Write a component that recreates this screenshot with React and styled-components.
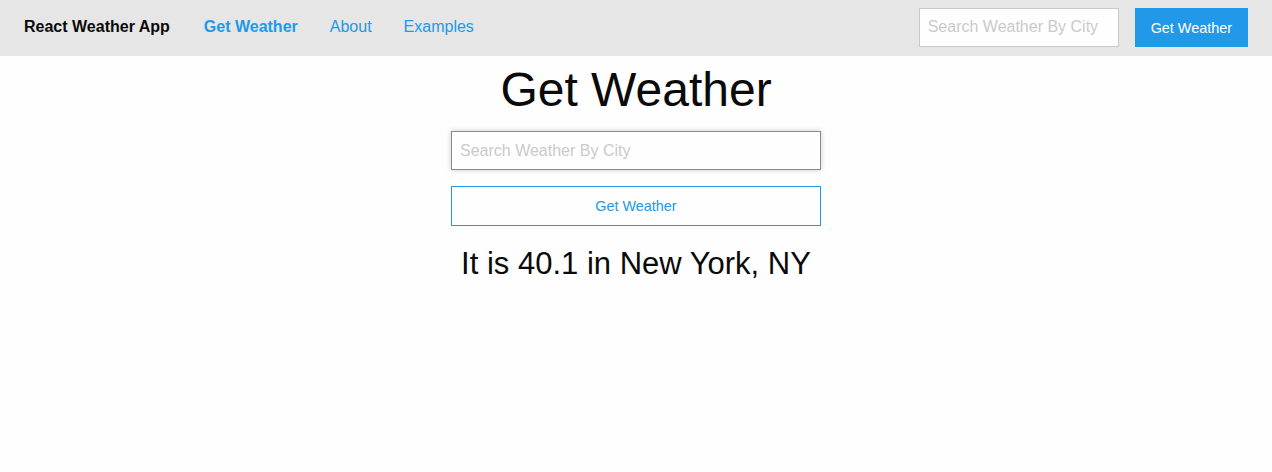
import styled, { createGlobalStyle } from "styled-components";

const GlobalStyle = createGlobalStyle`
  * { box-sizing: border-box; }
  html, body { margin: 0; padding: 0; background: #fefefe; }
  body {
    font-family: "Liberation Sans", Arial, Helvetica, sans-serif;
    color: #0a0a0a;
    font-size: 16px;
  }
  input::placeholder { color: #cacaca; opacity: 1; }
`

const TopBar = styled.div`
  height: 56px;
  background: #e6e6e6;
  padding: 0 24px 2px 8px;
  display: flex;
  align-items: center;
  justify-content: space-between;
`

const Menu = styled.ul`
  display: flex;
  align-items: center;
  list-style: none;
  margin: 0;
  padding: 0;
  gap: ${p => p.gap || 0}px;
`

const MenuText = styled.li`
  font-weight: bold;
  padding: 11px 18px 11px 16px;
  line-height: 1;
`

const MenuLink = styled.a`
  display: block;
  padding: 11px 16px;
  line-height: 1;
  color: #2199e8;
  text-decoration: none;
  font-weight: ${p => (p.active ? "bold" : "normal")};
`

const NavInput = styled.input`
  width: 200px;
  height: 39px;
  border: 1px solid #cacaca;
  background: #fefefe;
  padding: 8px;
  font-family: inherit;
  font-size: 16px;
  color: #0a0a0a;
  outline: none;
  margin: 0;
`

const Button = styled.button`
  font-family: inherit;
  font-size: 14.4px;
  line-height: 1;
  padding: 12px ${p => (p.hollow ? 16 : 15)}px;
  height: 39px;
  margin: 0;
  border: 1px solid ${p => (p.hollow ? "#2199e8" : "transparent")};
  background: ${p => (p.hollow ? "transparent" : "#2199e8")};
  color: ${p => (p.hollow ? "#2199e8" : "#fefefe")};
  width: ${p => (p.expanded ? "100%" : "auto")};
  cursor: pointer;
`

const Main = styled.div`
  width: 370px;
  margin: 0 auto;
  text-align: center;
`

const Title = styled.h1`
  font-size: 48px;
  line-height: 1.4;
  font-weight: normal;
  margin: 0 0 8px;
`

const SearchInput = styled.input`
  display: block;
  width: 100%;
  height: 39px;
  padding: 8px;
  margin: 0 0 16px;
  border: 1px solid #8a8a8a;
  box-shadow: 0 0 5px #cacaca;
  background: #fefefe;
  font-family: inherit;
  font-size: 16px;
  color: #0a0a0a;
  outline: none;
`

const SubmitButton = styled(Button)`
  height: 40px;
  margin-bottom: 16px;
`

const Result = styled.h3`
  font-size: 31px;
  line-height: 1.4;
  font-weight: normal;
  margin: 0;
`

function App() {
  return (
    <>
      <GlobalStyle />
      <TopBar>
        <Menu>
          <MenuText>React Weather App</MenuText>
          <li><MenuLink href="#" active>Get Weather</MenuLink></li>
          <li><MenuLink href="#">About</MenuLink></li>
          <li><MenuLink href="#">Examples</MenuLink></li>
        </Menu>
        <Menu gap={16}>
          <li><NavInput type="text" placeholder="Search Weather By City" /></li>
          <li><Button>Get Weather</Button></li>
        </Menu>
      </TopBar>
      <Main>
        <Title>Get Weather</Title>
        <SearchInput type="text" placeholder="Search Weather By City" autoFocus />
        <SubmitButton hollow expanded>Get Weather</SubmitButton>
        <Result>It is 40.1 in New York, NY</Result>
      </Main>
    </>
  )
}

export default App
